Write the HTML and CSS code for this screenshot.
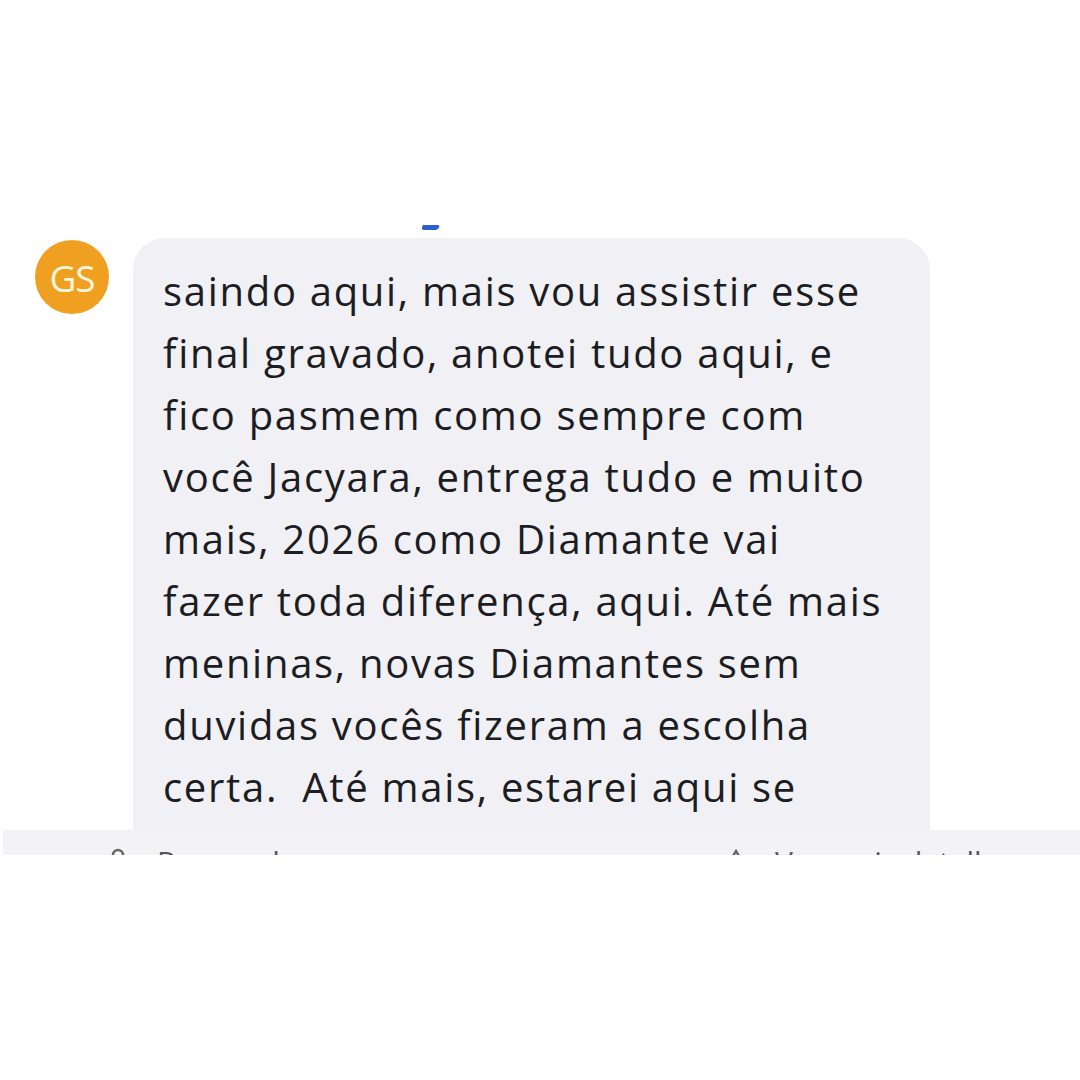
FILE: index.html
```html
<!DOCTYPE html>
<html lang="pt">
<head>
<meta charset="utf-8">
<link rel="stylesheet" href="styles.css">
</head>
<body>
<div class="shot">
  <div class="top-strip"><span class="link-frag"></span></div>
  <div class="row">
    <div class="avatar">GS</div>
    <div class="bubble">
      <p class="msg">saindo aqui, mais vou assistir esse<br>final gravado, anotei tudo aqui, e<br>fico pasmem como sempre com<br>você Jacyara, entrega tudo e muito<br>mais, 2026 como Diamante vai<br>fazer toda diferença, aqui. Até mais<br>meninas, novas Diamantes sem<br>duvidas vocês fizeram a escolha<br>certa.&nbsp; Até mais, estarei aqui se<br>precisarem de algo.</p>
    </div>
  </div>
  <div class="footer">
    <span class="f-item f-left">
      <svg class="f-icon" width="18" height="24" viewBox="0 0 18 24"><circle cx="9" cy="8" r="5" fill="none" stroke="#666" stroke-width="2.4"/></svg>
      <span>Responder</span>
    </span>
    <span class="f-item f-right">
      <svg class="f-icon" width="18" height="24" viewBox="0 0 18 24"><path d="M3 14 L9 4 L15 14" fill="none" stroke="#666" stroke-width="2.4"/></svg>
      <span>Ver mais detalhes</span>
    </span>
  </div>
</div>
</body>
</html>
```
FILE: styles.css
```css
html, body {
  margin: 0;
  padding: 0;
  background: #ffffff;
}
body {
  width: 1080px;
  height: 1080px;
  overflow: hidden;
  font-family: "Open Sans", "Noto Sans", sans-serif;
}
.shot {
  margin-top: 224px;
  height: 631px;
  display: flex;
  flex-direction: column;
  overflow: hidden;
}
.top-strip {
  height: 14px;
  position: relative;
}
.link-frag {
  position: absolute;
  left: 422px;
  top: 1px;
  width: 17px;
  height: 5px;
  background: #2d5fc9;
  border-radius: 0 4px 6px 6px;
  transform: skewX(-20deg);
}
.row {
  flex: 1;
  display: flex;
  align-items: flex-start;
  gap: 24px;
  padding-left: 35px;
  overflow: hidden;
}
.avatar {
  flex: none;
  width: 74px;
  height: 74px;
  margin-top: 2px;
  border-radius: 50%;
  background: #f0a021;
  color: #fff6dd;
  font-size: 37px;
  display: flex;
  align-items: center;
  justify-content: center;
  letter-spacing: -1px;
}
.bubble {
  width: 737px;
  background: #f0f0f5;
  border-radius: 32px;
  padding: 22px 30px 40px 30px;
}
.msg {
  margin: 0;
  color: #1c1d22;
  font-size: 40px;
  line-height: 62px;
  letter-spacing: 1.7px;
  white-space: nowrap;
}
.footer {
  flex: none;
  height: 25px;
  background: #f3f3f5;
  margin-left: 3px;
  position: relative;
  overflow: hidden;
}
.f-item {
  position: absolute;
  top: 17px;
  color: #555;
  font-size: 30px;
  line-height: 30px;
  display: flex;
  align-items: flex-start;
  gap: 30px;
}
.f-left { left: 106px; }
.f-right { left: 724px; }
.f-icon { flex: none; }
```
